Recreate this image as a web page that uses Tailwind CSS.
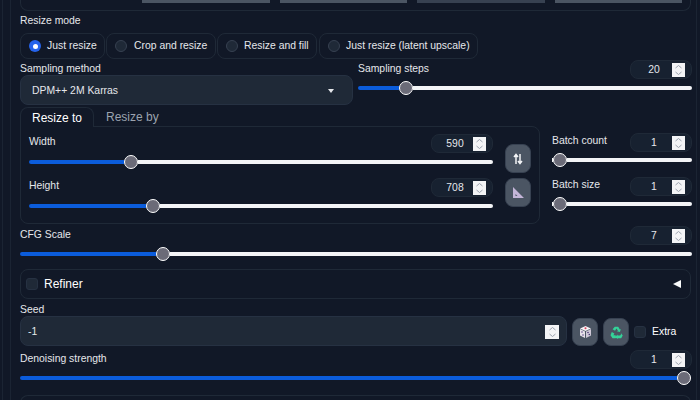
<!DOCTYPE html>
<html><head><meta charset="utf-8"><script src="https://cdn.jsdelivr.net/npm/@tailwindcss/browser@4"></script></head>
<body class="m-0">
<div class="w-[700px] h-[400px] overflow-hidden bg-[#111827] font-['Liberation_Sans',Arial,sans-serif] text-[10.4px] text-[#e5e7eb] flex">
  <div class="w-[9px] ml-[2px] border-x border-[#1b2433] shrink-0"></div>
  <div class="w-[672px] ml-[9px] shrink-0 flex flex-col">
    <!-- top panel -->
    <div class="h-[11px] w-[671px] border border-t-0 border-[#1f2937] rounded-b-lg flex gap-[10px] pl-[121px] shrink-0">
      <div class="w-[128px] h-[3px] bg-[#4b5563]"></div><div class="w-[127px] h-[3px] bg-[#4b5563]"></div><div class="w-[128px] h-[3px] bg-[#374151]"></div><div class="w-[127px] h-[3px] bg-[#4b5563]"></div>
    </div>
    <div class="h-[22px] leading-[20px] shrink-0">Resize mode</div>
    <!-- radios -->
    <div class="h-[26px] flex gap-px shrink-0 whitespace-nowrap">
      <div class="w-[85px] border border-[#1f2937] rounded-lg flex items-center pl-[8px] gap-[6px]"><span class="w-3 h-3 rounded-full bg-[#2563eb] flex items-center justify-center"><span class="w-[5px] h-[5px] rounded-full bg-white"></span></span>Just resize</div>
      <div class="w-[110px] border border-[#1f2937] rounded-lg flex items-center pl-[8px] gap-[7px]"><span class="w-3 h-3 rounded-full bg-[#1f2937] border border-[#374151]"></span>Crop and resize</div>
      <div class="w-[100px] border border-[#1f2937] rounded-lg flex items-center pl-[8px] gap-[6px] mr-px"><span class="w-3 h-3 rounded-full bg-[#1f2937] border border-[#374151]"></span>Resize and fill</div>
      <div class="w-[159px] border border-[#1f2937] rounded-lg flex items-center pl-[8px] gap-[6px]"><span class="w-3 h-3 rounded-full bg-[#1f2937] border border-[#374151]"></span>Just resize (latent upscale)</div>
    </div>
    <!-- sampling -->
    <div class="h-[48px] flex gap-[5px] shrink-0">
      <div class="w-[333px] flex flex-col">
        <div class="h-[16px] leading-[20px]">Sampling method</div>
        <div class="h-[30px] bg-[#1f2937] border border-[#263142] rounded-lg flex items-center justify-between pl-[11px] pr-[18px] pt-px">DPM++ 2M Karras
          <svg width="6" height="4" viewBox="0 0 6 4"><path d="M0 0h6L3 4z" fill="#e5e7eb"/></svg></div>
      </div>
      <div class="w-[334px] flex flex-col">
        <div class="h-[20px] mt-px flex justify-between items-start">
          <span class="leading-[16px] mt-px">Sampling steps</span>
          <div class="w-[62px] h-[19px] bg-[#172130] border border-[#1f2937] rounded-lg flex items-center pl-[5px]"><span class="w-[36px] text-center">20</span><div class="w-[13px] h-[14px] bg-[#f3f4f6] flex items-center justify-center"><svg width="9" height="12" viewBox="0 0 9 12" fill="none" stroke="#9ca3af"><path d="M1.5 4 4.5 1.5 7.5 4M1.5 8 4.5 10.500 7.500 8"/></svg></div></div>
        </div>
        <div class="h-[14px] flex items-center mt-px">
          <div class="w-[41px] h-[4px] bg-[#0b5cdb] rounded-l-full"></div><div class="w-[14px] h-[14px] rounded-full bg-[#6b6b78] border-[1.500px] border-white shrink-0"></div><div class="flex-1 h-[4px] bg-[#f3f4f6] rounded-r-full"></div>
        </div>
      </div>
    </div>
    <!-- size -->
    <div class="h-[119px] flex gap-[12px] shrink-0">
      <div class="w-[520px] flex flex-col">
        <div class="h-[20px] flex text-[12px] shrink-0 z-10">
          <div class="w-[74px] h-[20px] border border-b-0 border-[#1f2937] rounded-t-lg bg-[#111827] flex items-center justify-center text-white">Resize to</div>
          <div class="ml-[12px] flex items-center text-[#9ca3af]">Resize by</div>
        </div>
        <div class="h-[98px] -mt-px border border-[#1f2937] rounded-b-lg rounded-tr-lg flex pl-[8px]">
          <div class="w-[464px] flex flex-col">
            <div class="h-[20px] mt-[7px] flex justify-between items-start shrink-0">
              <span class="leading-[16px]">Width</span>
              <div class="w-[62px] h-[19px] bg-[#172130] border border-[#1f2937] rounded-lg flex items-center pl-[5px]"><span class="w-[36px] text-center">590</span><div class="w-[13px] h-[14px] bg-[#f3f4f6] flex items-center justify-center"><svg width="9" height="12" viewBox="0 0 9 12" fill="none" stroke="#9ca3af"><path d="M1.5 4 4.5 1.5 7.500 4M1.500 8 4.500 10.500 7.500 8"/></svg></div></div>
            </div>
            <div class="h-[14px] flex items-center mt-px shrink-0">
              <div class="w-[95px] h-[4px] bg-[#0b5cdb] rounded-l-full"></div><div class="w-[14px] h-[14px] rounded-full bg-[#6b6b78] border-[1.500px] border-white shrink-0"></div><div class="flex-1 h-[4px] bg-[#f3f4f6] rounded-r-full"></div>
            </div>
            <div class="h-[20px] mt-[9px] flex justify-between items-start shrink-0">
              <span class="leading-[16px]">Height</span>
              <div class="w-[62px] h-[19px] bg-[#172130] border border-[#1f2937] rounded-lg flex items-center pl-[5px]"><span class="w-[36px] text-center">708</span><div class="w-[13px] h-[14px] bg-[#f3f4f6] flex items-center justify-center"><svg width="9" height="12" viewBox="0 0 9 12" fill="none" stroke="#9ca3af"><path d="M1.5 4 4.5 1.5 7.500 4M1.500 8 4.500 10.500 7.500 8"/></svg></div></div>
            </div>
            <div class="h-[14px] flex items-center mt-px shrink-0">
              <div class="w-[117px] h-[4px] bg-[#0b5cdb] rounded-l-full"></div><div class="w-[14px] h-[14px] rounded-full bg-[#6b6b78] border-[1.500px] border-white shrink-0"></div><div class="flex-1 h-[4px] bg-[#f3f4f6] rounded-r-full"></div>
            </div>
          </div>
          <div class="ml-[12px] mt-[17px] flex flex-col gap-[5px]">
            <div class="w-[26px] h-[29px] bg-[#4b5563] border border-[#374151] rounded-lg flex items-center justify-center"><svg width="10" height="12" viewBox="0 0 10 12" fill="none" stroke="#f3f4f6" stroke-width="1.500"><path d="M3 11V2M1 4l2-2.500L5 4M7 1v9M5 8l2 2.500L9 8"/></svg></div>
            <div class="w-[26px] h-[29px] bg-[#4b5563] border border-[#374151] rounded-lg flex items-center justify-center"><svg width="13" height="13" viewBox="0 0 13 13"><path fill-rule="evenodd" d="M1 1 12 12H1zM3.500 8v2h2z" fill="#c4b5d8"/></svg></div>
          </div>
        </div>
      </div>
      <div class="w-[140px] flex flex-col">
        <div class="h-[19px] mt-[26px] flex justify-between items-center shrink-0">
          <span class="-mt-[4px]">Batch count</span>
          <div class="w-[62px] h-[19px] bg-[#172130] border border-[#1f2937] rounded-lg flex items-center pl-[5px]"><span class="w-[36px] text-center">1</span><div class="w-[13px] h-[14px] bg-[#f3f4f6] flex items-center justify-center"><svg width="9" height="12" viewBox="0 0 9 12" fill="none" stroke="#9ca3af"><path d="M1.5 4 4.5 1.5 7.500 4M1.500 8 4.500 10.500 7.500 8"/></svg></div></div>
        </div>
        <div class="h-[14px] flex items-center mt-px shrink-0">
          <div class="w-px h-[4px] bg-[#f3f4f6]"></div><div class="w-[14px] h-[14px] rounded-full bg-[#6b6b78] border-[1.500px] border-white shrink-0"></div><div class="flex-1 h-[4px] bg-[#f3f4f6] rounded-r-full"></div>
        </div>
        <div class="h-[19px] mt-[10px] flex justify-between items-center shrink-0">
          <span class="-mt-[4px]">Batch size</span>
          <div class="w-[62px] h-[19px] bg-[#172130] border border-[#1f2937] rounded-lg flex items-center pl-[5px]"><span class="w-[36px] text-center">1</span><div class="w-[13px] h-[14px] bg-[#f3f4f6] flex items-center justify-center"><svg width="9" height="12" viewBox="0 0 9 12" fill="none" stroke="#9ca3af"><path d="M1.5 4 4.5 1.5 7.500 4M1.500 8 4.500 10.500 7.500 8"/></svg></div></div>
        </div>
        <div class="h-[14px] flex items-center mt-px shrink-0">
          <div class="w-px h-[4px] bg-[#f3f4f6]"></div><div class="w-[14px] h-[14px] rounded-full bg-[#6b6b78] border-[1.500px] border-white shrink-0"></div><div class="flex-1 h-[4px] bg-[#f3f4f6] rounded-r-full"></div>
        </div>
      </div>
    </div>
    <!-- cfg -->
    <div class="h-[19px] flex justify-between items-center shrink-0">
      <span class="-mt-[1px]">CFG Scale</span>
      <div class="w-[62px] h-[19px] bg-[#172130] border border-[#1f2937] rounded-lg flex items-center pl-[5px]"><span class="w-[36px] text-center">7</span><div class="w-[13px] h-[14px] bg-[#f3f4f6] flex items-center justify-center"><svg width="9" height="12" viewBox="0 0 9 12" fill="none" stroke="#9ca3af"><path d="M1.5 4 4.5 1.5 7.500 4M1.500 8 4.500 10.500 7.500 8"/></svg></div></div>
    </div>
    <div class="h-[14px] flex items-center mt-[2px] shrink-0">
      <div class="w-[136px] h-[4px] bg-[#0b5cdb] rounded-l-full"></div><div class="w-[14px] h-[14px] rounded-full bg-[#6b6b78] border-[1.500px] border-white shrink-0"></div><div class="flex-1 h-[4px] bg-[#f3f4f6] rounded-r-full"></div>
    </div>
    <!-- refiner -->
    <div class="h-[30px] w-[671px] mt-[8px] border border-[#1f2937] rounded-lg flex items-center pl-[5px] pr-[9px] shrink-0">
      <span class="w-3 h-3 rounded-[3px] bg-[#1f2937] border border-[#263142] mr-[6px]"></span><span class="text-[12px] text-white">Refiner</span>
      <svg class="ml-auto" width="8" height="8" viewBox="0 0 8 8"><path d="M8 0v8L0 4z" fill="#f9fafb"/></svg>
    </div>
    <!-- seed -->
    <div class="h-[17px] leading-[21px] shrink-0">Seed</div>
    <div class="h-[30px] flex items-center shrink-0">
      <div class="w-[547px] h-[30px] bg-[#1f2937] border border-[#263142] rounded-lg flex items-center justify-between pl-[7px] pr-[7px]"><span class="mt-[2px]">-1</span>
        <div class="w-[14px] h-[14px] mt-px bg-[#f3f4f6] flex items-center justify-center"><svg width="9" height="12" viewBox="0 0 9 12" fill="none" stroke="#9ca3af"><path d="M1.5 4 4.5 1.5 7.500 4M1.500 8 4.500 10.500 7.500 8"/></svg></div>
      </div>
      <div class="w-[26px] h-[28px] mt-[2px] ml-[5px] bg-[#4b5563] border border-[#374151] rounded-lg flex items-center justify-center"><svg width="13" height="14" viewBox="0 0 13 14"><path d="M6.500 1 12 3.500 6.500 6 1 3.500z" fill="#f6f3f6"/><path d="M1 4 6 6.500V13L1 10.500z" fill="#e6e1e9"/><path d="M12 4 7 6.500V13l5-2.500z" fill="#cfc9d8"/><circle cx="6.500" cy="3.300" r="1" fill="#d9415a"/><circle cx="3" cy="7" r=".8" fill="#5b4a86"/><circle cx="4" cy="10" r=".8" fill="#5b4a86"/><circle cx="9" cy="7.500" r=".8" fill="#4b3a76"/><circle cx="10.300" cy="9.500" r=".8" fill="#4b3a76"/></svg></div>
      <div class="w-[26px] h-[28px] mt-[2px] ml-[5px] bg-[#4b5563] border border-[#374151] rounded-lg flex items-center justify-center"><svg width="13" height="13" viewBox="0 0 13 13"><path d="M4.800 .8h3.400l1.700 2.800 1-.5-1 3-3-.8 1-.5-1.400-2.200-1.500 2.200L2.600 3.300zM1.800 6l2.600 1.500-1 1.700h2.300V12.300H2.500L.5 9.200zM10.800 6.800l1.900 2.600-1.500 2.900H7.500v1l-2-2.500 2-2.300v1h2.700l1-1.400z" fill="#34d399"/></svg></div>
      <span class="w-3 h-3 mt-px ml-[5px] rounded-[3px] bg-[#1f2937] border border-[#263142]"></span>
      <span class="ml-[6px] text-white mt-px">Extra</span>
    </div>
    <!-- denoise -->
    <div class="h-[19px] mt-[4px] flex justify-between items-center shrink-0">
      <span class="-mt-[2px]">Denoising strength</span>
      <div class="w-[62px] h-[19px] bg-[#172130] border border-[#1f2937] rounded-lg flex items-center pl-[5px]"><span class="w-[36px] text-center">1</span><div class="w-[13px] h-[14px] bg-[#f3f4f6] flex items-center justify-center"><svg width="9" height="12" viewBox="0 0 9 12" fill="none" stroke="#9ca3af"><path d="M1.5 4 4.500 1.500 7.500 4M1.500 8 4.500 10.500 7.500 8"/></svg></div></div>
    </div>
    <div class="h-[14px] flex items-center mt-[2px] shrink-0">
      <div class="flex-1 h-[4px] bg-[#0b5cdb] rounded-l-full"></div><div class="w-[14px] h-[14px] rounded-full bg-[#6b6b78] border-[1.500px] border-white shrink-0 mr-px"></div>
    </div>
    <div class="h-[10px] w-[671px] mt-[10px] border border-b-0 border-[#1f2937] rounded-t-lg shrink-0"></div>
  </div>
  <div class="w-[4px] ml-[4px] border-l border-[#1b2433] shrink-0"></div>
</div>
</body></html>
